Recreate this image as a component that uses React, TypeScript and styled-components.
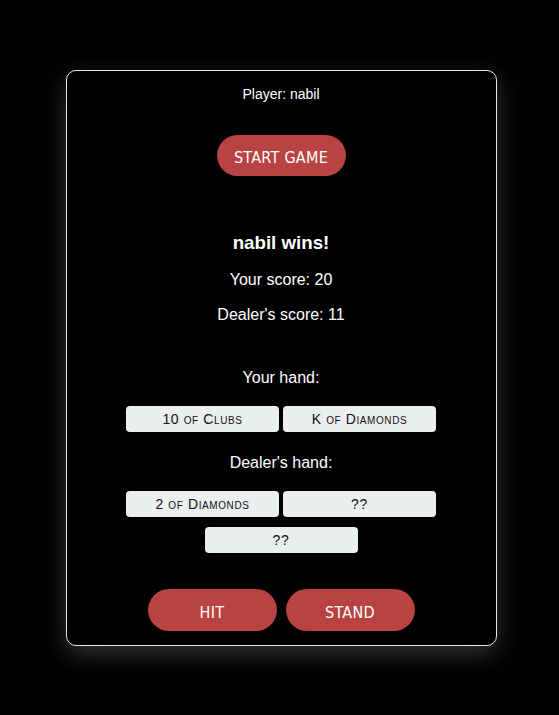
import * as React from "react";
import styled, { createGlobalStyle } from "styled-components";

const GlobalStyle = createGlobalStyle`
  body {
    margin: 0;
    background: #000;
    font-family: "Liberation Sans", Arial, sans-serif;
    color: #fff;
  }
`;

const Page = styled.div`
  display: flex;
  justify-content: center;
  padding: 70px 0 0 3px;
  min-height: 715px;
  box-sizing: border-box;
`;

const Table = styled.div`
  width: 431px;
  height: 576px;
  box-sizing: border-box;
  border: 1px solid #e6e6e6;
  border-radius: 10px;
  padding: 14px 20px 14px;
  display: flex;
  flex-direction: column;
  align-items: center;
  text-align: center;
  box-shadow: 0 8px 24px rgba(255, 255, 255, 0.2);
`;

const PlayerLabel = styled.div`
  font-size: 14px;
  line-height: 18px;
`;

const PillButton = styled.button<{ $top?: number }>`
  width: 129px;
  height: 42px;
  margin-top: ${(p) => p.$top ?? 0}px;
  padding: 4px 0 0;
  border: none;
  border-radius: 21px;
  background: #b94343;
  color: #fff;
  font-family: "DejaVu Sans Condensed", "DejaVu Sans", sans-serif;
  font-stretch: condensed;
  font-size: 16px;
  letter-spacing: 0.3px;
  text-transform: uppercase;
  cursor: pointer;
`;

const Result = styled.h3`
  margin: 56px 0 0;
  font-size: 18.72px;
  line-height: 22px;
  font-weight: 700;
`;

const Line = styled.p<{ $top: number }>`
  margin: ${(p) => p.$top}px 0 0;
  font-size: 16px;
  line-height: 20px;
`;

const Hand = styled.div`
  width: 310px;
  margin-top: 18px;
  display: flex;
  flex-wrap: wrap;
  justify-content: center;
  column-gap: 4px;
  row-gap: 10px;
`;

const Card = styled.div`
  width: 153px;
  height: 26px;
  border-radius: 4px;
  background: #eceff0;
  color: #111;
  font-size: 14px;
  letter-spacing: 0.6px;
  font-variant: small-caps;
  display: flex;
  align-items: center;
  justify-content: center;
`;

const Actions = styled.div`
  display: flex;
  gap: 9px;
  margin-top: 36px;
`;

const playerCards = ["10 of Clubs", "K of Diamonds"];
const dealerCards = ["2 of Diamonds", "??", "??"];

export default function App() {
  return (
    <>
      <GlobalStyle />
      <Page>
        <Table>
          <PlayerLabel>Player: nabil</PlayerLabel>
          <PillButton $top={32}>Start Game</PillButton>

          <Result>nabil wins!</Result>
          <Line $top={16}>Your score: 20</Line>
          <Line $top={15}>Dealer's score: 11</Line>

          <Line $top={43}>Your hand:</Line>
          <Hand>
            {playerCards.map((c, i) => (
              <Card key={i}>{c}</Card>
            ))}
          </Hand>

          <Line $top={21}>Dealer's hand:</Line>
          <Hand>
            {dealerCards.map((c, i) => (
              <Card key={i}>{c}</Card>
            ))}
          </Hand>

          <Actions>
            <PillButton>Hit</PillButton>
            <PillButton>Stand</PillButton>
          </Actions>
        </Table>
      </Page>
    </>
  );
}
